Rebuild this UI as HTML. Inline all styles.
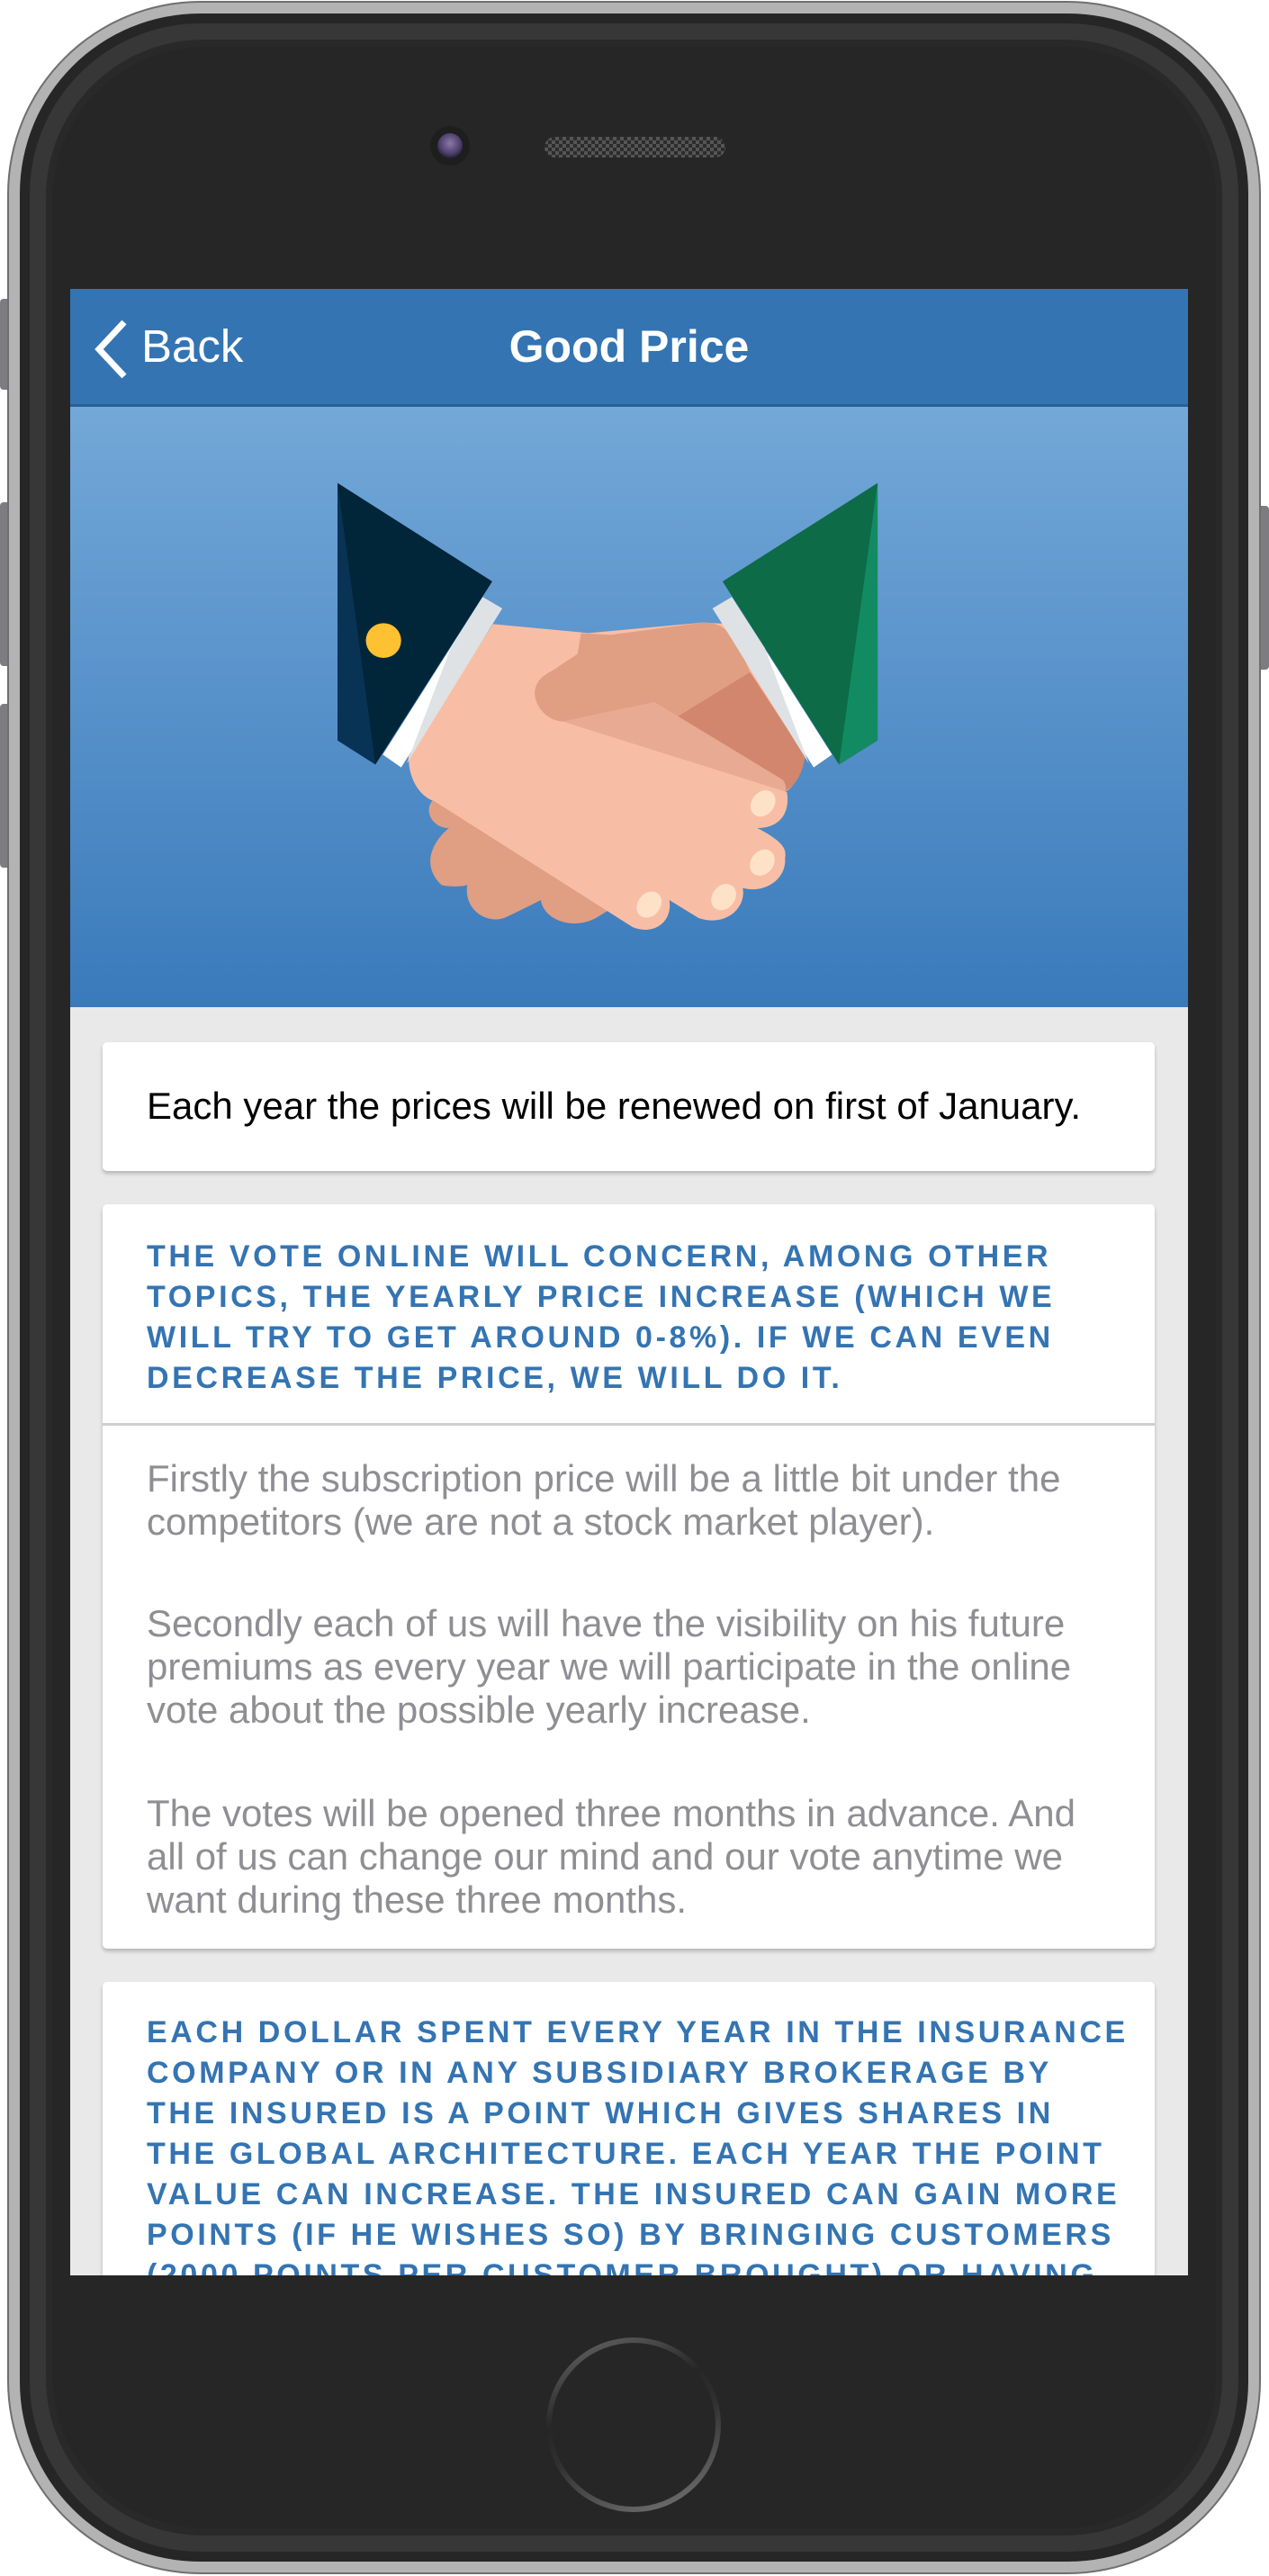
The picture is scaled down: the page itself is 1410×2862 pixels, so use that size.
<!DOCTYPE html>
<html><head><meta charset="utf-8"><style>
*{margin:0;padding:0;box-sizing:border-box}
html,body{width:1410px;height:2862px;background:#fff;overflow:hidden;font-family:"Liberation Sans",Arial,sans-serif}
.abs{position:absolute}
.btn{position:absolute;background:#7d7c80;border-radius:4px 0 0 4px}
.card{position:absolute;left:114px;width:1169px;background:#fff;border-radius:5px;box-shadow:0 3px 4px rgba(0,0,0,.22)}
.caps{color:#3474b2;font-size:34px;font-weight:bold;letter-spacing:3.6px;line-height:45px;white-space:nowrap;position:absolute;left:49px}
.gray{color:#8e8e93;font-size:42px;line-height:48px;white-space:nowrap;position:absolute;left:49px}
</style></head><body>
<div class="btn" style="left:0;top:332px;width:12px;height:101px"></div>
<div class="btn" style="left:0;top:558px;width:12px;height:182px"></div>
<div class="btn" style="left:0;top:782px;width:12px;height:182px"></div>
<div class="btn" style="left:1398px;top:562px;width:12px;height:182px;border-radius:0 4px 4px 0"></div>
<div class="abs" style="left:8px;top:1px;width:1393px;height:2859px;border-radius:215px;background:#6f6f6f"></div>
<div class="abs" style="left:10px;top:3px;width:1389px;height:2855px;border-radius:213px;background:#b3b3b3"></div>
<div class="abs" style="left:22px;top:15px;width:1365px;height:2831px;border-radius:200px;background:#262626"></div>
<div class="abs" style="left:33px;top:26px;width:1343px;height:2809px;border-radius:190px;background:#373737"></div>
<div class="abs" style="left:51px;top:44px;width:1307px;height:2773px;border-radius:175px;background:#292929"></div>
<div class="abs" style="left:58px;top:52px;width:1293px;height:2757px;border-radius:170px;background:#262626"></div>
<div class="abs" style="left:478px;top:140px;width:44px;height:44px;border-radius:50%;background:#1e1e1e"></div>
<div class="abs" style="left:486px;top:148px;width:28px;height:28px;border-radius:50%;background:radial-gradient(circle at 50% 40%,#8a7aa8,#4b3c6a 55%,#1a1a24 80%)"></div>
<div class="abs" style="left:605px;top:152px;width:201px;height:23px;border-radius:12px;background:repeating-conic-gradient(#555 0 25%,#2c2c2c 0 50%) 0 0/8px 8px"></div>
<svg class="abs" style="left:600px;top:2590px" width="210" height="210" viewBox="0 0 210 210">
<defs><linearGradient id="hb" x1="0.3" y1="0" x2="0.7" y2="1"><stop offset="0" stop-color="#5a5a5a"/><stop offset=".35" stop-color="#262626"/><stop offset=".55" stop-color="#303030"/><stop offset="1" stop-color="#6a6a6a"/></linearGradient></defs>
<circle cx="104" cy="104" r="94" fill="none" stroke="url(#hb)" stroke-width="6"/></svg>
<div class="abs" style="left:78px;top:321px;width:1242px;height:2207px;background:#e9e9e9;overflow:hidden">
  <div class="abs" style="left:0;top:0;width:1242px;height:131px;background:#3474b2;border-bottom:3px solid #2b5f94"></div>
  <svg class="abs" style="left:22px;top:33px" width="44" height="68" viewBox="0 0 44 68"><path d="M38 4 L10 34 L38 64" fill="none" stroke="#fff" stroke-width="7"/></svg>
  <div class="abs" style="left:79px;top:34px;color:#fff;font-size:51px;line-height:60px">Back</div>
  <div class="abs" style="left:0;width:1242px;top:34px;text-align:center;color:#fff;font-size:50px;font-weight:bold;line-height:60px">Good Price</div>
  <div class="abs" style="left:0;top:131px;width:1242px;height:667px;background:linear-gradient(#73a8d8,#3a7abb)"></div>
  <svg class="abs" style="left:282px;top:199px" width="640" height="520" viewBox="0 0 1568 1560" preserveAspectRatio="none">
    <g>
      <path d="M330 1090 C260 1100 280 1200 340 1200 C300 1240 260 1320 320 1390 C360 1400 390 1390 390 1390 C380 1470 440 1520 490 1500 C560 1460 590 1440 590 1440 C600 1510 680 1540 740 1500 L780 1470 L560 1150 Z" fill="#e09e83"/>
      <path d="M230 960 L460 520 L720 550 L1030 515 L1110 520 L1310 960 C1290 1060 1260 1080 1250 1080 L1000 920 Z" fill="#f8bea5"/>
      <path d="M700 550 L780 556 L1030 515 C1080 515 1110 530 1160 680 L960 830 L900 780 L650 845 C590 840 560 760 580 720 C590 690 620 680 640 660 L690 620 Z" fill="#e09e83"/>
      <path d="M960 830 L1160 680 L1310 960 C1300 1040 1270 1070 1250 1080 Z" fill="#d1866d"/>
      <path d="M650 845 L900 780 L1250 1040 C1260 1060 1260 1080 1250 1080 Z" fill="#e8aa92"/>
      <path d="M230 960 C230 1050 270 1100 300 1110 L840 1530 C900 1560 950 1510 940 1440 L1020 1500 C1090 1530 1150 1470 1140 1400 C1200 1420 1260 1370 1255 1300 C1260 1270 1250 1245 1180 1200 C1240 1200 1270 1150 1260 1080 L650 845 Z" fill="#f8bea5"/>
      <ellipse cx="1195" cy="1118" rx="32" ry="45" transform="rotate(20 1195 1118)" fill="#fde2c8"/>
      <ellipse cx="1193" cy="1315" rx="32" ry="45" transform="rotate(20 1193 1315)" fill="#fde2c8"/>
      <ellipse cx="1088" cy="1430" rx="32" ry="45" transform="rotate(20 1088 1430)" fill="#fde2c8"/>
      <ellipse cx="885" cy="1455" rx="32" ry="45" transform="rotate(20 885 1455)" fill="#fde2c8"/>
      <path d="M37 50 L458 378 L140 988 L37 908 Z" fill="#012539"/>
      <path d="M37 50 L140 988 L37 908 Z" fill="#093355"/>
      <ellipse cx="162" cy="575" rx="48" ry="58" fill="#fdc132"/>
      <path d="M432 430 L485 468 L210 998 L160 955 Z" fill="#fff"/>
      <path d="M432 430 L485 468 L225 985 L345 600 Z" fill="#dfe2e5"/>
      <path d="M1507 50 L1085 378 L1402 988 L1507 908 Z" fill="#0d6b48"/>
      <path d="M1507 50 L1402 988 L1507 908 Z" fill="#138b62"/>
      <path d="M1110 430 L1058 468 L1333 998 L1383 955 Z" fill="#fff"/>
      <path d="M1110 430 L1058 468 L1320 985 L1200 600 Z" fill="#dfe2e5"/>
    </g>
  </svg>
</div>
<div class="card" style="top:1158px;height:143px">
  <div class="abs" style="left:49px;top:43px;font-size:42px;line-height:56px;color:#000;white-space:nowrap">Each year the prices will be renewed on first of January.</div>
</div>
<div class="card" style="top:1338px;height:827px">
  <div class="caps" style="top:36px">THE VOTE ONLINE WILL CONCERN, AMONG OTHER<br>TOPICS, THE YEARLY PRICE INCREASE (WHICH WE<br>WILL TRY TO GET AROUND 0-8%). IF WE CAN EVEN<br>DECREASE THE PRICE, WE WILL DO IT.</div>
  <div class="abs" style="left:0;top:243px;width:1169px;height:3px;background:#cfcfd2"></div>
  <div class="gray" style="top:281px">Firstly the subscription price will be a little bit under the<br>competitors (we are not a stock market player).</div>
  <div class="gray" style="top:442px">Secondly each of us will have the visibility on his future<br>premiums as every year we will participate in the online<br>vote about the possible yearly increase.</div>
  <div class="gray" style="top:653px">The votes will be opened three months in advance. And<br>all of us can change our mind and our vote anytime we<br>want during these three months.</div>
</div>
<div class="abs" style="left:78px;top:2202px;width:1242px;height:326px;overflow:hidden">
  <div class="card" style="left:36px;top:0;height:400px">
    <div class="caps" style="top:34px">EACH DOLLAR SPENT EVERY YEAR IN THE INSURANCE<br>COMPANY OR IN ANY SUBSIDIARY BROKERAGE BY<br>THE INSURED IS A POINT WHICH GIVES SHARES IN<br>THE GLOBAL ARCHITECTURE. EACH YEAR THE POINT<br>VALUE CAN INCREASE. THE INSURED CAN GAIN MORE<br>POINTS (IF HE WISHES SO) BY BRINGING CUSTOMERS<br>(2000 POINTS PER CUSTOMER BROUGHT) OR HAVING</div>
  </div>
</div>
</body></html>
